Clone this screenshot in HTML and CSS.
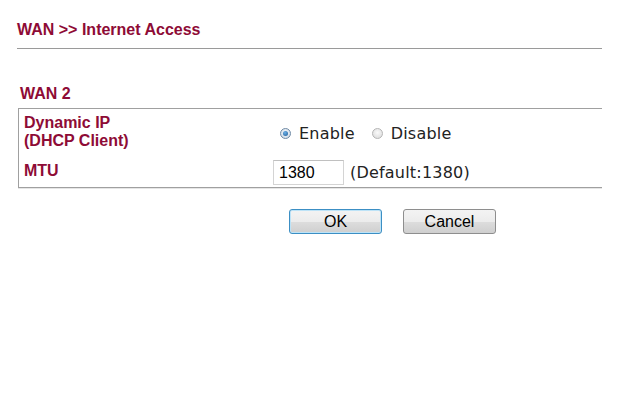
FILE: index.html
```html
<!DOCTYPE html>
<html>
<head>
<meta charset="utf-8">
<link rel="stylesheet" href="styles.css">
</head>
<body>
<div class="page">
  <div class="title">WAN &gt;&gt; Internet Access</div>
  <div class="section-title">WAN 2</div>
  <div class="box">
    <div class="row row-ip">
      <div class="label">Dynamic IP<br>(DHCP Client)</div>
      <div class="value radios">
        <label class="opt"><span class="radio checked"></span>Enable</label>
        <label class="opt"><span class="radio"></span>Disable</label>
      </div>
    </div>
    <div class="row row-mtu">
      <div class="label">MTU</div>
      <div class="value">
        <span class="input">1380</span>
        <span class="hint">(Default:1380)</span>
      </div>
    </div>
  </div>
  <div class="buttons">
    <button class="btn btn-ok">OK</button>
    <button class="btn">Cancel</button>
  </div>
</div>
</body>
</html>
```
FILE: styles.css
```css
html, body {
  margin: 0;
  padding: 0;
  background: #fff;
}
.page {
  width: 640px;
  height: 400px;
  font-family: "Liberation Sans", Arial, sans-serif;
}
.title {
  margin-left: 17px;
  width: 585px;
  padding-top: 21px;
  height: 27px;
  border-bottom: 1px solid #9a9a9a;
  font-weight: bold;
  font-size: 16px;
  line-height: 18px;
  color: #8e0b36;
}
.section-title {
  margin: 36px 0 0 20px;
  font-weight: bold;
  font-size: 16px;
  line-height: 18px;
  height: 23px;
  color: #8e0b36;
}
.box {
  margin-left: 18px;
  width: 583px;
  border-top: 1px solid #a0a0a0;
  border-left: 1px solid #a0a0a0;
  border-bottom: 1px solid #a0a0a0;
  box-shadow: 0 1px 0 #e6e6e6;
}
.row {
  display: flex;
  align-items: center;
}
.row-ip {
  height: 45px;
  padding-top: 1px;
  box-sizing: border-box;
}
.row-mtu {
  height: 33px;
}
.label {
  width: 254px;
  padding-left: 5px;
  box-sizing: border-box;
  font-weight: bold;
  font-size: 16px;
  line-height: 18px;
  color: #8e0b36;
}
.value {
  display: flex;
  align-items: center;
  font-family: "DejaVu Sans", Verdana, sans-serif;
  font-size: 16px;
  letter-spacing: 0.2px;
  color: #222;
}
.radios {
  padding-left: 7px;
  padding-top: 3px;
}
.opt {
  display: flex;
  align-items: center;
  margin-right: 17px;
}
.radio {
  width: 11px;
  height: 11px;
  border-radius: 50%;
  box-sizing: border-box;
  border: 1px solid #b5b5b5;
  background: radial-gradient(circle at 50% 40%, #fafafa, #d8d8d8);
  margin-right: 8px;
  position: relative;
}
.radio.checked {
  border-color: #6f8aa5;
  background: radial-gradient(circle at 50% 40%, #f5f8fb, #c9d6e3);
}
.radio.checked::after {
  content: "";
  position: absolute;
  left: 2px;
  top: 2px;
  width: 5px;
  height: 5px;
  border-radius: 50%;
  background: radial-gradient(circle at 40% 35%, #6ab0e8, #1e5a95);
}
.input {
  display: inline-block;
  width: 71px;
  height: 25px;
  box-sizing: border-box;
  border: 1px solid #d4d4d4;
  border-top-color: #c0c0c0;
  padding: 3px 0 0 5px;
  font-family: "Liberation Sans", Arial, sans-serif;
  font-size: 16px;
  line-height: 18px;
  letter-spacing: 0;
  color: #000;
  margin-top: 3px;
}
.hint {
  margin-left: 6px;
  margin-top: 4px;
}
.buttons {
  display: flex;
  gap: 21px;
  margin: 21px 0 0 289px;
}
.btn {
  width: 93px;
  height: 25px;
  box-sizing: border-box;
  border: 1px solid #8e8e8e;
  border-radius: 3px;
  background: linear-gradient(#f3f3f3, #ececec 50%, #dddddd 51%, #cfcfcf);
  font-family: "Liberation Sans", Arial, sans-serif;
  font-size: 16px;
  color: #000;
  padding: 0;
}
.btn-ok {
  border-color: #3c8fc4;
  box-shadow: inset 0 0 0 1px #bde3f7;
}
```
